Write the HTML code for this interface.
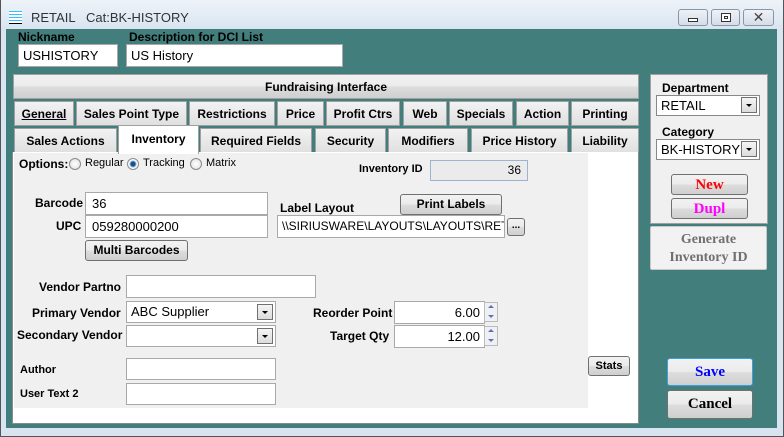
<!DOCTYPE html>
<html><head><meta charset="utf-8"><style>
*{box-sizing:border-box;margin:0;padding:0}
body{width:784px;height:437px;overflow:hidden;background:#d9e4f1;font-family:"Liberation Sans",Arial,sans-serif;font-size:12px;position:relative}
.a{position:absolute}
.b{font-weight:bold}
.inp{position:absolute;background:#fff;border:1px solid #a9a9a9;padding-left:6px;line-height:20px;font-size:13px;white-space:nowrap;overflow:hidden}
.btn{position:absolute;border:1px solid #707070;border-radius:3px;background:linear-gradient(#f2f2f2 0%,#ebebeb 50%,#dddddd 51%,#cfcfcf 100%);text-align:center;font-weight:bold;font-size:12px}
.tab{position:absolute;height:25px;line-height:24px;border:1px solid #a0a0a0;background:linear-gradient(#f2f2f2,#e0e0e0);text-align:center;font-weight:bold;font-size:12px}
.dd{position:absolute;right:2px;top:2px;width:16px;height:16px;border:1px solid #707070;background:linear-gradient(#f4f4f4,#dcdcdc)}
.dd:after{content:"";position:absolute;left:4px;top:6px;border-left:3px solid transparent;border-right:3px solid transparent;border-top:3px solid #000}
.spin{position:absolute;width:14px;height:20px;border:1px solid #bbb;background:#eef0f4}
.spin:before{content:"";position:absolute;left:3px;top:2px;border-left:3px solid transparent;border-right:3px solid transparent;border-bottom:3px solid #6070b0}
.spin:after{content:"";position:absolute;left:3px;top:12px;border-left:3px solid transparent;border-right:3px solid transparent;border-top:3px solid #6070b0}
.lbl{position:absolute;font-weight:bold;font-size:12px;white-space:nowrap}
.rad{position:absolute;width:12px;height:12px;border-radius:50%;border:1px solid #8a8a8a;background:radial-gradient(#fff,#ddd)}
</style></head><body>
<div class="a" style="left:0;top:0;width:784px;height:437px;border:1px solid #555;border-top:none;background:linear-gradient(#eef3f9,#d9e4f1 30px)"></div>
<!-- title -->
<div class="a" style="left:9px;top:11px;width:13px;height:13px;background:repeating-linear-gradient(#2ec0ff 0 1px,#fff 1px 3px);border-bottom:1px solid #000"></div>
<div class="a" style="left:31px;top:10px;font-size:13px;color:#333">RETAIL</div>
<div class="a" style="left:86px;top:10px;font-size:13px;color:#333">Cat:BK-HISTORY</div>
<div class="a" style="left:678px;top:9px;width:30px;height:17px;border:1px solid #8a96a6;border-radius:3px;background:linear-gradient(#eef2f7,#d5dde8)"><div class="a" style="left:9px;top:8px;width:10px;height:4px;border:1px solid #333;background:#fff"></div></div>
<div class="a" style="left:711px;top:9px;width:29px;height:17px;border:1px solid #8a96a6;border-radius:3px;background:linear-gradient(#eef2f7,#d5dde8)"><div class="a" style="left:9px;top:3px;width:10px;height:9px;border:1px solid #333;background:#fff"><div class="a" style="left:2px;top:2px;width:4px;height:3px;border:1px solid #333"></div></div></div>
<div class="a" style="left:743px;top:9px;width:31px;height:17px;border:1px solid #8a96a6;border-radius:3px;background:linear-gradient(#eef2f7,#d5dde8);text-align:center;line-height:15px;font-size:14px;color:#444">✕</div>
<!-- client -->
<div class="a" style="left:6px;top:29px;width:771px;height:399px;background:#427e7c"></div>
<div class="lbl" style="left:18px;top:30px">Nickname</div>
<div class="lbl" style="left:129px;top:30px">Description for DCI List</div>
<div class="inp" style="left:18px;top:44px;width:100px;height:23px;line-height:21px;padding-left:4px">USHISTORY</div>
<div class="inp" style="left:126px;top:44px;width:217px;height:23px;line-height:21px;padding-left:4px">US History</div>
<div class="btn" style="left:13px;top:74px;width:626px;height:25px;line-height:24px;border-radius:0;border-color:#a0a0a0">Fundraising Interface</div>
<!-- tabs -->
<div class="tab" style="left:14px;top:101px;width:60px"><u>General</u></div>
<div class="tab" style="left:76px;top:101px;width:111px">Sales Point Type</div>
<div class="tab" style="left:189px;top:101px;width:86px">Restrictions</div>
<div class="tab" style="left:277px;top:101px;width:47px">Price</div>
<div class="tab" style="left:326px;top:101px;width:74px">Profit Ctrs</div>
<div class="tab" style="left:403px;top:101px;width:44px">Web</div>
<div class="tab" style="left:449px;top:101px;width:64px">Specials</div>
<div class="tab" style="left:516px;top:101px;width:53px">Action</div>
<div class="tab" style="left:571px;top:101px;width:68px">Printing</div>
<div class="tab" style="left:14px;top:128px;width:103px">Sales Actions</div>
<div class="tab" style="left:200px;top:128px;width:112px">Required Fields</div>
<div class="tab" style="left:315px;top:128px;width:71px">Security</div>
<div class="tab" style="left:388px;top:128px;width:80px">Modifiers</div>
<div class="tab" style="left:471px;top:128px;width:97px">Price History</div>
<div class="tab" style="left:571px;top:128px;width:68px">Liability</div>
<!-- panel -->
<div class="a" style="left:12px;top:152px;width:627px;height:272px;background:#fff;border:1px solid #8a8a8a;border-top:none"></div>
<div class="a" style="left:14px;top:153px;width:574px;height:255px;background:#f0f0f0"></div>
<div class="a" style="left:118px;top:125px;width:81px;height:29px;background:#fff;border:1px solid #a0a0a0;border-bottom:none;text-align:center;line-height:26px;font-weight:bold">Inventory</div>
<!-- options -->
<div class="lbl" style="left:19px;top:157px">Options:</div>
<div class="rad" style="left:69px;top:158px"></div><div class="a" style="left:85px;top:157px;font-size:11px">Regular</div>
<div class="rad" style="left:127px;top:158px;background:radial-gradient(#1a4f8a 0 2px,#8ab4e0 3px,#fff 4px)"></div><div class="a" style="left:143px;top:157px;font-size:11px">Tracking</div>
<div class="rad" style="left:190px;top:158px"></div><div class="a" style="left:206px;top:157px;font-size:11px">Matrix</div>
<div class="lbl" style="left:359px;top:163px;font-size:11px">Inventory ID</div>
<div class="inp" style="left:430px;top:160px;width:98px;height:21px;line-height:19px;background:#ebebeb;border:1px solid #9cb4cf;text-align:right;padding-right:6px;font-size:12px">36</div>
<div class="lbl" style="left:35px;top:196px">Barcode</div>
<div class="inp" style="left:85px;top:192px;width:183px;height:23px;line-height:21px">36</div>
<div class="lbl" style="left:56px;top:219px">UPC</div>
<div class="inp" style="left:85px;top:215px;width:183px;height:23px;line-height:21px">059280000200</div>
<div class="btn" style="left:85px;top:240px;width:103px;height:21px;line-height:19px">Multi Barcodes</div>
<div class="lbl" style="left:280px;top:201px">Label Layout</div>
<div class="btn" style="left:400px;top:194px;width:102px;height:21px;line-height:19px">Print Labels</div>
<div class="inp" style="left:277px;top:215px;width:228px;height:23px;line-height:21px;padding-left:4px;font-size:12px">\\SIRIUSWARE\LAYOUTS\LAYOUTS\RET</div>
<div class="btn" style="left:507px;top:218px;width:18px;height:18px;line-height:14px;font-size:10px">...</div>
<div class="lbl" style="left:39px;top:280px">Vendor Partno</div>
<div class="inp" style="left:126px;top:275px;width:190px;height:23px"></div>
<div class="lbl" style="left:32px;top:306px">Primary Vendor</div>
<div class="inp" style="left:126px;top:301px;width:150px;height:22px;line-height:20px;padding-left:4px">ABC Supplier<div class="dd" style="top:2px"></div></div>
<div class="lbl" style="left:17px;top:328px">Secondary Vendor</div>
<div class="inp" style="left:126px;top:325px;width:150px;height:22px"><div class="dd"></div></div>
<div class="lbl" style="left:20px;top:364px;font-size:11px">Author</div>
<div class="inp" style="left:126px;top:358px;width:150px;height:22px"></div>
<div class="lbl" style="left:20px;top:388px;font-size:11px">User Text 2</div>
<div class="inp" style="left:126px;top:383px;width:150px;height:22px"></div>
<div class="lbl" style="left:313px;top:306px">Reorder Point</div>
<div class="inp" style="left:394px;top:301px;width:91px;height:23px;line-height:21px;text-align:right;padding-right:4px">6.00</div>
<div class="spin" style="left:484px;top:302px"></div>
<div class="lbl" style="left:330px;top:329px">Target Qty</div>
<div class="inp" style="left:394px;top:325px;width:91px;height:23px;line-height:21px;text-align:right;padding-right:4px">12.00</div>
<div class="spin" style="left:484px;top:326px"></div>
<div class="btn" style="left:588px;top:356px;width:42px;height:20px;line-height:18px;font-size:11px">Stats</div>
<!-- right panel -->
<div class="a" style="left:650px;top:74px;width:118px;height:150px;background:#f0f0f0;border:1px solid #a0a0a0"></div>
<div class="lbl" style="left:662px;top:81px">Department</div>
<div class="inp" style="left:656px;top:95px;width:104px;height:21px;line-height:19px;padding-left:4px;border-color:#888">RETAIL<div class="dd" style="top:1px"></div></div>
<div class="lbl" style="left:662px;top:125px">Category</div>
<div class="inp" style="left:656px;top:139px;width:104px;height:21px;line-height:19px;padding-left:4px;border-color:#888">BK-HISTORY<div class="dd" style="top:1px"></div></div>
<div class="btn" style="left:671px;top:174px;width:77px;height:21px;line-height:20px;font-family:'Liberation Serif',serif;font-size:15px;color:#f00">New</div>
<div class="btn" style="left:671px;top:198px;width:77px;height:21px;line-height:20px;font-family:'Liberation Serif',serif;font-size:15px;color:#f0f">Dupl</div>
<div class="a" style="left:650px;top:226px;width:117px;height:44px;background:#f2f2f2;border:1px solid #c8c8c8;border-radius:2px;text-align:center;font-family:'Liberation Serif',serif;font-weight:bold;font-size:14px;color:#707070;line-height:18px;padding-top:4px">Generate<br>Inventory ID</div>
<div class="btn" style="left:667px;top:358px;width:86px;height:28px;line-height:26px;font-family:'Liberation Serif',serif;font-size:15px;color:#0000ff;border-color:#3ca0e0">Save</div>
<div class="btn" style="left:667px;top:390px;width:86px;height:29px;line-height:27px;font-family:'Liberation Serif',serif;font-size:15px;color:#000">Cancel</div>
</body></html>
